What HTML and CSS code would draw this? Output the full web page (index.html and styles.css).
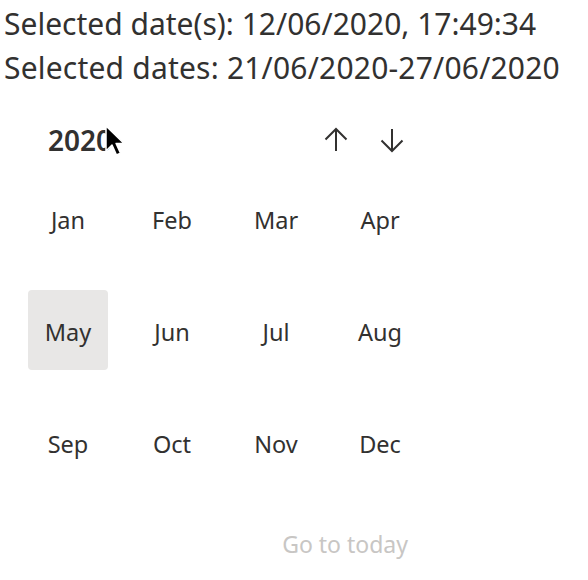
FILE: index.html
```html
<!DOCTYPE html>
<html>
<head>
<meta charset="utf-8">
<link rel="stylesheet" href="styles.css">
</head>
<body>
<div class="info">
  <div class="line">Selected date(s): 12/06/2020, 17:49:34</div>
  <div class="line">Selected dates: 21/06/2020-27/06/2020</div>
</div>
<div class="calendar">
  <div class="header">
    <div class="year">2020</div>
    <div class="navs">
      <button class="nav" aria-label="Previous year">
        <svg width="26" height="26" viewBox="0 0 26 26"><path d="M13 24V2M2.5 12.5L13 2l10.5 10.5" fill="none" stroke="#323130" stroke-width="2"/></svg>
      </button>
      <button class="nav" aria-label="Next year">
        <svg width="26" height="26" viewBox="0 0 26 26"><path d="M13 2v22M2.5 13.5L13 24l10.5-10.5" fill="none" stroke="#323130" stroke-width="2"/></svg>
      </button>
    </div>
  </div>
  <div class="grid">
    <div class="month">Jan</div>
    <div class="month">Feb</div>
    <div class="month">Mar</div>
    <div class="month">Apr</div>
    <div class="month selected">May</div>
    <div class="month">Jun</div>
    <div class="month">Jul</div>
    <div class="month">Aug</div>
    <div class="month">Sep</div>
    <div class="month">Oct</div>
    <div class="month">Nov</div>
    <div class="month">Dec</div>
  </div>
  <div class="footer">
    <button class="today">Go to today</button>
  </div>
  <svg class="cursor" width="24" height="34" viewBox="0 0 24 34">
    <path d="M1 1v25l6-6 4.5 10 4-1.8-4.4-9.7H19z" fill="#000" stroke="#fff" stroke-width="1.5" stroke-linejoin="round"/>
  </svg>
</div>
</body>
</html>
```
FILE: styles.css
```css
html, body {
  margin: 0;
  padding: 0;
  background: #fff;
}
body {
  font-family: "Noto Sans", "Open Sans", sans-serif;
  color: #323130;
}
.info {
  padding: 2px 0 0 4px;
}
.line {
  font-size: 30px;
  line-height: 44px;
  white-space: nowrap;
}
.line + .line {
  letter-spacing: 0.2px;
}
.calendar {
  position: relative;
  width: 392px;
  padding-left: 28px;
  margin-top: 30px;
}
.header {
  display: flex;
  align-items: center;
  justify-content: space-between;
  height: 40px;
}
.year {
  padding-left: 20px;
  font-size: 28px;
  font-weight: 600;
}
.navs {
  display: flex;
  gap: 24px;
  margin-right: 12px;
}
.nav {
  width: 32px;
  height: 40px;
  padding: 0;
  border: 0;
  background: none;
  display: flex;
  align-items: center;
  justify-content: center;
}
.grid {
  display: grid;
  grid-template-columns: repeat(4, 80px);
  grid-auto-rows: 80px;
  column-gap: 24px;
  row-gap: 32px;
  margin-top: 18px;
}
.month {
  display: flex;
  align-items: center;
  justify-content: center;
  font-size: 23.5px;
  border-radius: 4px;
  padding-top: 3px;
  box-sizing: border-box;
}
.month.selected {
  background: #e8e7e6;
}
.footer {
  display: flex;
  justify-content: flex-end;
  margin-top: 42px;
}
.today {
  border: 0;
  background: none;
  font-family: inherit;
  font-size: 23px;
  color: #c8c6c4;
  padding: 0 12px;
  height: 40px;
}
.cursor {
  position: absolute;
  left: 105px;
  top: 5px;
}
```
